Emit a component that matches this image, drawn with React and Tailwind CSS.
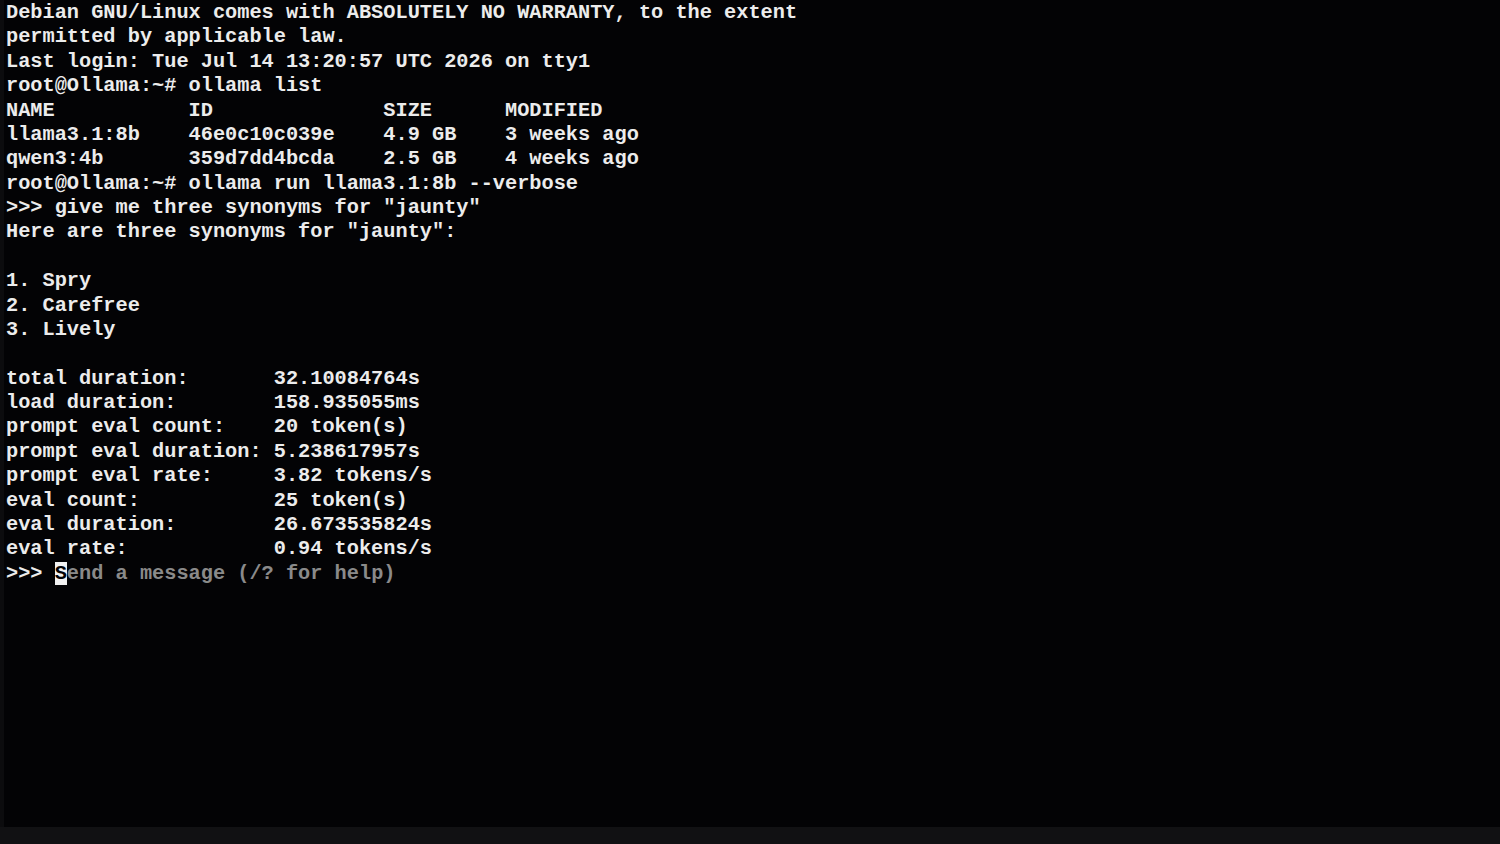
import React from 'react';

const lines = [
  'Debian GNU/Linux comes with ABSOLUTELY NO WARRANTY, to the extent',
  'permitted by applicable law.',
  'Last login: Tue Jul 14 13:20:57 UTC 2026 on tty1',
  'root@Ollama:~# ollama list',
  'NAME           ID              SIZE      MODIFIED',
  'llama3.1:8b    46e0c10c039e    4.9 GB    3 weeks ago',
  'qwen3:4b       359d7dd4bcda    2.5 GB    4 weeks ago',
  'root@Ollama:~# ollama run llama3.1:8b --verbose',
  '>>> give me three synonyms for "jaunty"',
  'Here are three synonyms for "jaunty":',
  '',
  '1. Spry',
  '2. Carefree',
  '3. Lively',
  '',
  'total duration:       32.10084764s',
  'load duration:        158.935055ms',
  'prompt eval count:    20 token(s)',
  'prompt eval duration: 5.238617957s',
  'prompt eval rate:     3.82 tokens/s',
  'eval count:           25 token(s)',
  'eval duration:        26.673535824s',
  'eval rate:            0.94 tokens/s',
];

const App = () => {
  return (
    <div className="flex h-[844px] w-[1500px] flex-col bg-[#030305] overflow-hidden">
      <div className="flex flex-1 border-l-[4px] border-[#0c0c0e]">
        <pre className="flex-1 pl-[2px] pt-[1px] font-['Liberation_Mono','Courier_New',monospace] text-[20.3px] font-bold leading-[24.38px] text-[#ececec]">
          {lines.map((l, i) => (
            <div key={i} className="h-[24.38px]">{l}</div>
          ))}
          <div className="h-[24.38px]">
            {'>>> '}
            <span className="bg-[#f2f2f2] text-[#030305]">S</span>
            <span className="text-[#8a8a8a]">end a message (/? for help)</span>
          </div>
        </pre>
      </div>
      <div className="h-[17px] bg-[#111113]" />
    </div>
  );
};

export default App;
